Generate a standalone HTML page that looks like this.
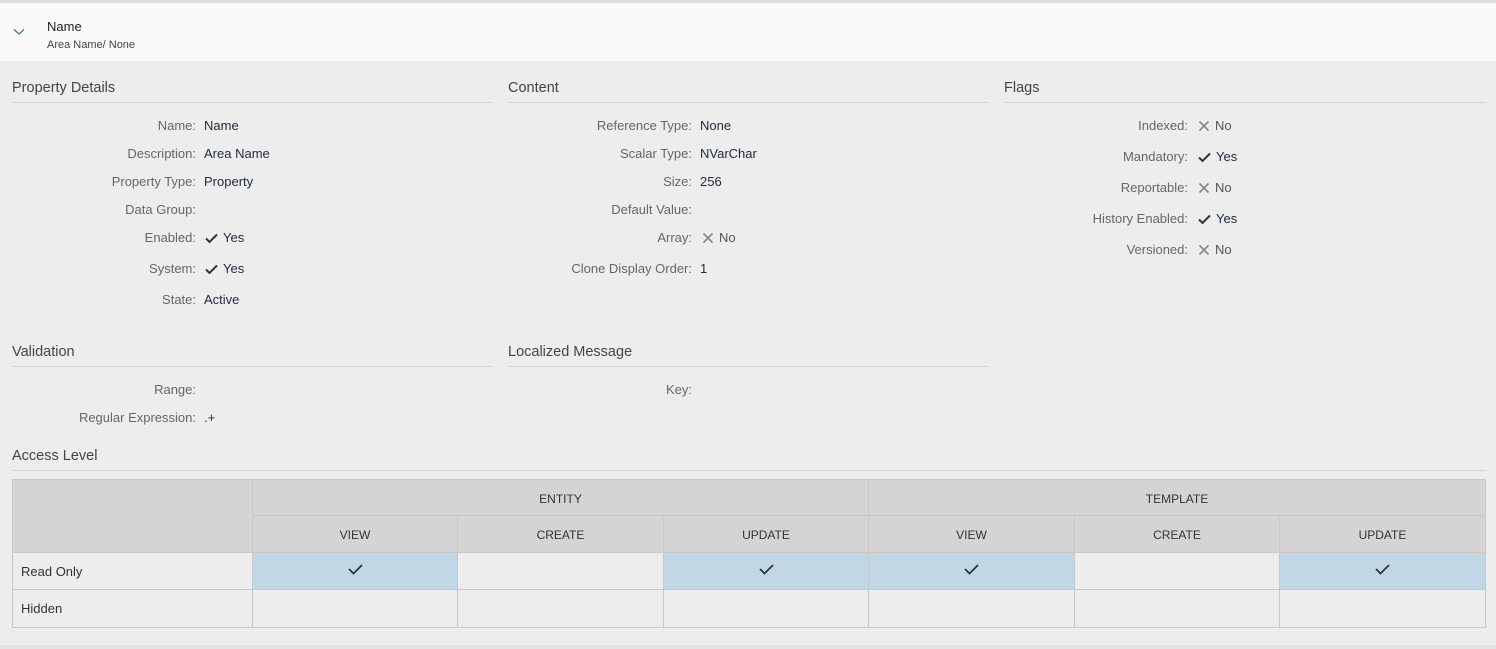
<!DOCTYPE html>
<html><head><meta charset="utf-8"><style>
*{margin:0;padding:0;box-sizing:border-box}
body{width:1496px;height:649px;background:#ededed;font-family:"Liberation Sans",sans-serif;position:relative;overflow:hidden;color:#333}
.a{position:absolute;white-space:nowrap;line-height:20px;margin-top:1px}
.top{position:absolute;left:0;top:0;width:1496px;height:3px;background:#dcdcdc}
.hdr{position:absolute;left:0;top:3px;width:1496px;height:58px;background:#fafafa}
.h{position:absolute;font-size:14.5px;color:#444;line-height:20px;margin-top:1px}
.line{position:absolute;height:1px;background:#d4d4d4}
.l{position:absolute;font-size:13px;color:#666;text-align:right;line-height:20px;margin-top:1px}
.v{position:absolute;font-size:13px;color:#1e2a3a;line-height:20px;white-space:nowrap;margin-top:1px}
.v svg{vertical-align:-2px;margin-right:5px}
.gray{color:#555}
table{position:absolute;left:12px;top:479px;border-collapse:collapse;border:1px solid #a9a9a9;font-size:12px}
td{border:1px solid #c8c8c8;text-align:center;color:#333}
.hd td{background:#d4d4d4}
tr.r td{background:#ededed;height:37px}
td.lab{text-align:left;padding-left:8px;font-size:13px}
td.b{background:#c1d7e5!important}
.bot{position:absolute;left:0;top:645px;width:1496px;height:4px;background:#e3e3e3}
</style></head><body>
<div class="top"></div>
<div class="hdr"></div>
<svg class="a" style="left:13px;top:27px" width="12" height="8" viewBox="0 0 12 8"><path d="M1 1.5L6 6L11 1.5" stroke="#3a6a9a" stroke-width="1.2" fill="none"/></svg>
<div class="a" style="left:47px;top:16px;font-size:13px;color:#222">Name</div>
<div class="a" style="left:47px;top:34px;font-size:11px;color:#444">Area Name/ None</div>

<div class="h" style="left:12px;top:77px">Property Details</div>
<div class="line" style="left:12px;top:102px;width:481px"></div>
<div class="h" style="left:508px;top:77px">Content</div>
<div class="line" style="left:508px;top:102px;width:481px"></div>
<div class="h" style="left:1004px;top:77px">Flags</div>
<div class="line" style="left:1004px;top:102px;width:482px"></div>

<div class="l" style="right:1300px;top:115px">Name:</div><div class="v" style="left:204px;top:115px">Name</div>
<div class="l" style="right:1300px;top:143px">Description:</div><div class="v" style="left:204px;top:143px">Area Name</div>
<div class="l" style="right:1300px;top:171px">Property Type:</div><div class="v" style="left:204px;top:171px">Property</div>
<div class="l" style="right:1300px;top:199px">Data Group:</div>
<div class="l" style="right:1300px;top:227px">Enabled:</div><div class="v" style="left:205px;top:227px"><svg width="13" height="11" viewBox="0 0 13 11"><path d="M1 5.5L4.5 9L12 1.5" stroke="#333" stroke-width="2" fill="none"/></svg>Yes</div>
<div class="l" style="right:1300px;top:258px">System:</div><div class="v" style="left:205px;top:258px"><svg width="13" height="11" viewBox="0 0 13 11"><path d="M1 5.5L4.5 9L12 1.5" stroke="#333" stroke-width="2" fill="none"/></svg>Yes</div>
<div class="l" style="right:1300px;top:289px">State:</div><div class="v" style="left:204px;top:289px">Active</div>

<div class="l" style="right:804px;top:115px">Reference Type:</div><div class="v" style="left:700px;top:115px">None</div>
<div class="l" style="right:804px;top:143px">Scalar Type:</div><div class="v" style="left:700px;top:143px">NVarChar</div>
<div class="l" style="right:804px;top:171px">Size:</div><div class="v" style="left:700px;top:171px">256</div>
<div class="l" style="right:804px;top:199px">Default Value:</div>
<div class="l" style="right:804px;top:227px">Array:</div><div class="v gray" style="left:702px;top:227px"><svg width="12" height="12" viewBox="0 0 12 12"><path d="M1.5 1.5L10.5 10.5M10.5 1.5L1.5 10.5" stroke="#888" stroke-width="1.6"/></svg>No</div>
<div class="l" style="right:804px;top:258px">Clone Display Order:</div><div class="v" style="left:700px;top:258px">1</div>

<div class="l" style="right:308px;top:115px">Indexed:</div><div class="v gray" style="left:1198px;top:115px"><svg width="12" height="12" viewBox="0 0 12 12"><path d="M1.5 1.5L10.5 10.5M10.5 1.5L1.5 10.5" stroke="#888" stroke-width="1.6"/></svg>No</div>
<div class="l" style="right:308px;top:146px">Mandatory:</div><div class="v" style="left:1198px;top:146px"><svg width="13" height="11" viewBox="0 0 13 11"><path d="M1 5.5L4.5 9L12 1.5" stroke="#333" stroke-width="2" fill="none"/></svg>Yes</div>
<div class="l" style="right:308px;top:177px">Reportable:</div><div class="v gray" style="left:1198px;top:177px"><svg width="12" height="12" viewBox="0 0 12 12"><path d="M1.5 1.5L10.5 10.5M10.5 1.5L1.5 10.5" stroke="#888" stroke-width="1.6"/></svg>No</div>
<div class="l" style="right:308px;top:208px">History Enabled:</div><div class="v" style="left:1198px;top:208px"><svg width="13" height="11" viewBox="0 0 13 11"><path d="M1 5.5L4.5 9L12 1.5" stroke="#333" stroke-width="2" fill="none"/></svg>Yes</div>
<div class="l" style="right:308px;top:239px">Versioned:</div><div class="v gray" style="left:1198px;top:239px"><svg width="12" height="12" viewBox="0 0 12 12"><path d="M1.5 1.5L10.5 10.5M10.5 1.5L1.5 10.5" stroke="#888" stroke-width="1.6"/></svg>No</div>

<div class="h" style="left:12px;top:341px">Validation</div>
<div class="line" style="left:12px;top:366px;width:481px"></div>
<div class="h" style="left:508px;top:341px">Localized Message</div>
<div class="line" style="left:508px;top:366px;width:481px"></div>
<div class="l" style="right:1300px;top:379px">Range:</div>
<div class="l" style="right:1300px;top:407px">Regular Expression:</div><div class="v" style="left:204px;top:407px">.+</div>
<div class="l" style="right:804px;top:379px">Key:</div>

<div class="h" style="left:12px;top:445px">Access Level</div>
<div class="line" style="left:12px;top:470px;width:1474px"></div>

<table>
<colgroup><col style="width:240px"><col style="width:205px"><col style="width:206px"><col style="width:205px"><col style="width:206px"><col style="width:205px"><col style="width:206px"></colgroup>
<tr class="hd"><td rowspan="2"></td><td colspan="3" style="height:36px;padding-top:2px">ENTITY</td><td colspan="3" style="padding-top:2px">TEMPLATE</td></tr>
<tr class="hd"><td style="height:37px;padding-top:2px">VIEW</td><td style="padding-top:2px">CREATE</td><td style="padding-top:2px">UPDATE</td><td style="padding-top:2px">VIEW</td><td style="padding-top:2px">CREATE</td><td style="padding-top:2px">UPDATE</td></tr>
<tr class="r"><td class="lab">Read Only</td>
<td class="b"><svg width="15" height="11" viewBox="0 0 15 11"><path d="M1 5L5.5 9.5L14 1" stroke="#333" stroke-width="1.8" fill="none"/></svg></td><td></td>
<td class="b"><svg width="15" height="11" viewBox="0 0 15 11"><path d="M1 5L5.5 9.5L14 1" stroke="#333" stroke-width="1.8" fill="none"/></svg></td>
<td class="b"><svg width="15" height="11" viewBox="0 0 15 11"><path d="M1 5L5.5 9.5L14 1" stroke="#333" stroke-width="1.8" fill="none"/></svg></td><td></td>
<td class="b"><svg width="15" height="11" viewBox="0 0 15 11"><path d="M1 5L5.5 9.5L14 1" stroke="#333" stroke-width="1.8" fill="none"/></svg></td></tr>
<tr class="r"><td class="lab" style="height:38px">Hidden</td><td></td><td></td><td></td><td></td><td></td><td></td></tr>
</table>
<div class="bot"></div>
</body></html>
